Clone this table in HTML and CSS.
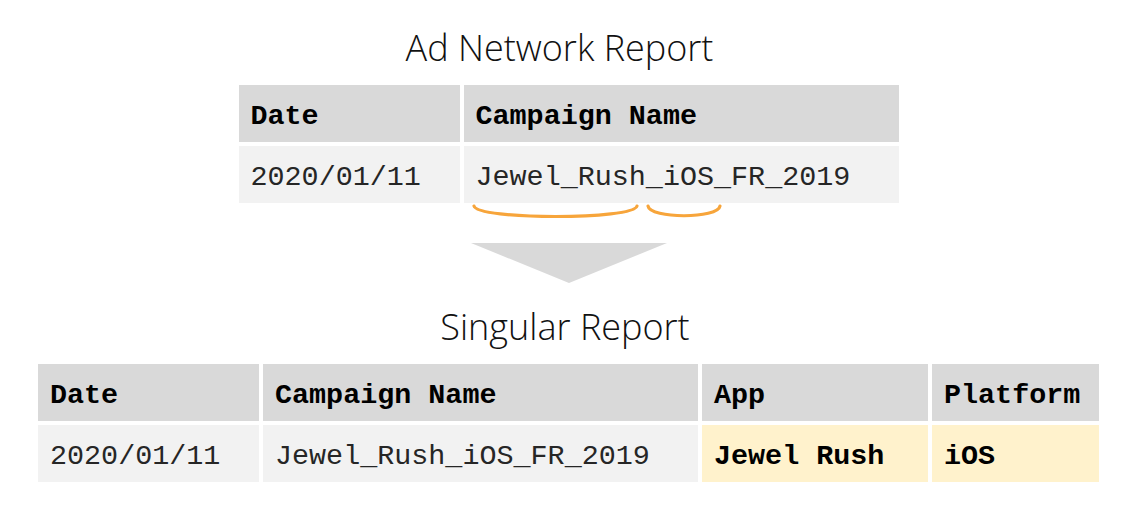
FILE: index.html
```html
<!DOCTYPE html>
<html>
<head>
<meta charset="utf-8">
<link rel="stylesheet" href="styles.css">
</head>
<body>
<main class="page">
  <h1 class="title title-top">Ad Network Report</h1>
  <div class="table table-top">
    <div class="cell head">Date</div>
    <div class="cell head">Campaign Name</div>
    <div class="cell data">2020/01/11</div>
    <div class="cell data">Jewel_Rush_iOS_FR_2019</div>
  </div>
  <svg class="connector" width="660" height="102" viewBox="0 0 660 102">
    <path d="M235 3 C 238 17, 395 17, 398 3" fill="none" stroke="#f7a53b" stroke-width="3.2" stroke-linecap="round"/>
    <path d="M409 3 C 411 16, 479 16, 481 3" fill="none" stroke="#f7a53b" stroke-width="3.2" stroke-linecap="round"/>
    <polygon points="232,40 428,40 330,80" fill="#d9d9d9"/>
  </svg>
  <h1 class="title title-bottom">Singular Report</h1>
  <div class="table table-bottom">
    <div class="cell head">Date</div>
    <div class="cell head">Campaign Name</div>
    <div class="cell head">App</div>
    <div class="cell head">Platform</div>
    <div class="cell data">2020/01/11</div>
    <div class="cell data">Jewel_Rush_iOS_FR_2019</div>
    <div class="cell data highlight">Jewel Rush</div>
    <div class="cell data highlight">iOS</div>
  </div>
</main>
</body>
</html>
```

FILE: styles.css
```css
html, body {
  margin: 0;
  padding: 0;
  background: #ffffff;
}

.page {
  width: 1134px;
  height: 516px;
  box-sizing: border-box;
  padding: 26px 0 0 3px;
  display: flex;
  flex-direction: column;
  align-items: center;
}

.title {
  margin: 0;
  font-family: "Open Sans", "Noto Sans", sans-serif;
  font-weight: 300;
  font-size: 36px;
  line-height: 44px;
  color: #111111;
}

.title-top {
  margin-right: 18px;
}

.title-bottom {
  margin-right: 7px;
}

.table {
  margin-top: 15px;
  display: grid;
  gap: 4px;
  grid-auto-rows: 57px;
  font-family: "Courier New", "Nimbus Mono PS", "FreeMono", "Liberation Mono", monospace;
  font-size: 28.4px;
  color: #262626;
}

.table-top {
  grid-template-columns: 221px 435px;
}

.table-bottom {
  grid-template-columns: 221px 435px 226px 167px;
}

.cell {
  display: flex;
  align-items: center;
  box-sizing: border-box;
  padding: 6px 0 0 12px;
  white-space: pre;
}

.head {
  background: #d9d9d9;
  font-weight: 700;
  color: #000000;
}

.data {
  background: #f2f2f2;
}

.highlight {
  background: #fff2cc;
  font-weight: 700;
  color: #000000;
}

.connector {
  display: block;
}
```
